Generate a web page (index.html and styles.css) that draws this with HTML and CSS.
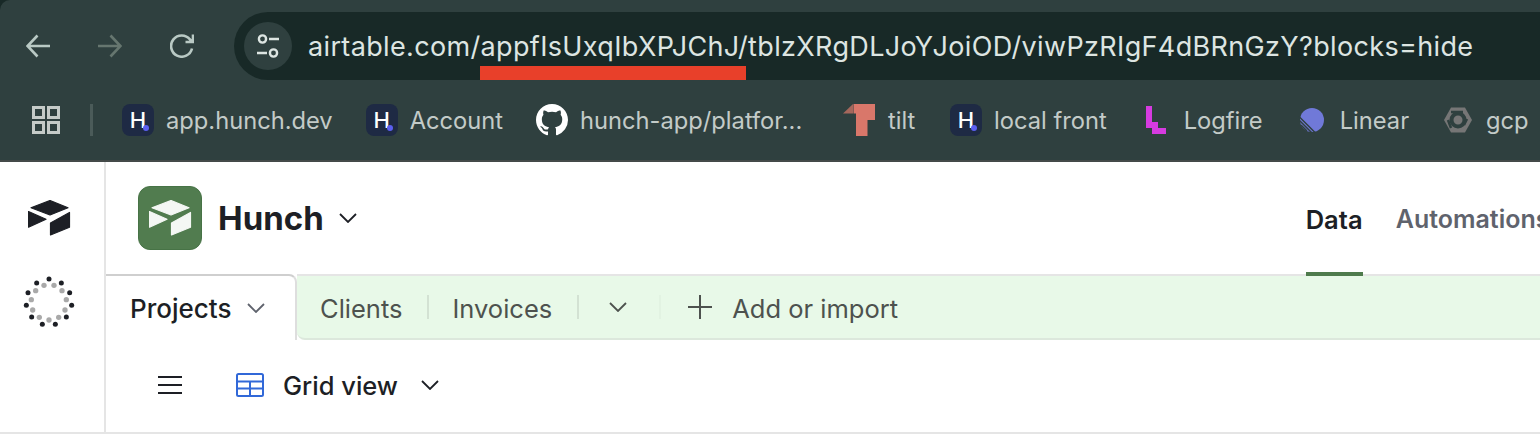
FILE: index.html
```html
<!DOCTYPE html>
<html lang="en">
<head>
    <meta charset="UTF-8">
    <title>Hunch: Data - Airtable</title>
    <link rel="stylesheet" href="styles.css">
</head>
<body>
    <!-- Browser chrome -->
    <header class="chrome">
        <div class="toolbar">
            <svg class="nav-icon" viewBox="0 0 24 24"><path d="M24 12H1.500M11.500 1.500 1.500 12l10 10.500"/></svg>
            <svg class="nav-icon nav-disabled" viewBox="0 0 24 24"><path d="M0 12h22.500M12.500 1.500l10 10.500-10 10.500"/></svg>
            <svg class="nav-icon" viewBox="0 0 24 24"><path d="M22 14.500A10.600 10.600 0 1 1 20 5.500L23 8M23 .5V8h-7.500"/></svg>
            <div class="omnibox">
                <span class="site-button">
                    <svg viewBox="0 0 24 24"><circle cx="6.500" cy="5" r="3.600"/><path d="M13 5h10M1 19h10"/><circle cx="17.500" cy="19" r="3.600"/></svg>
                </span>
                <span class="url">airtable.com/appfIsUxqIbXPJChJ/tblzXRgDLJoYJoiOD/viwPzRIgF4dBRnGzY?blocks=hide</span>
            </div>
            <span class="annotation"></span>
        </div>
        <nav class="bookmarks">
            <svg class="apps-icon" viewBox="0 0 28 28"><path d="M1.500 1.500h10v10h-10zM16.500 1.500h10v10h-10zM1.500 16.500h10v10h-10zM16.500 16.500h10v10h-10z"/></svg>
            <span class="bookmarks-sep"></span>
            <div class="bookmark-list">
                <a class="bookmark"><span class="hunch-icon">H</span>app.hunch.dev</a>
                <a class="bookmark"><span class="hunch-icon">H</span>Account</a>
                <a class="bookmark">
                    <svg class="fav" viewBox="0 0 16 16"><path fill="#fff" d="M8 0C3.58 0 0 3.58 0 8c0 3.54 2.29 6.53 5.47 7.59.4.07.55-.17.55-.38 0-.19-.01-.82-.01-1.49-2.01.37-2.53-.49-2.69-.94-.09-.23-.48-.94-.82-1.13-.28-.15-.68-.52-.01-.53.63-.01 1.08.58 1.23.82.72 1.21 1.87.87 2.33.66.07-.52.28-.87.51-1.07-1.78-.2-3.64-.89-3.64-3.95 0-.87.31-1.59.82-2.15-.08-.2-.36-1.02.08-2.12 0 0 .67-.21 2.2.82.64-.18 1.32-.27 2-.27s1.36.09 2 .27c1.53-1.04 2.2-.82 2.2-.82.44 1.1.16 1.92.08 2.12.51.56.82 1.27.82 2.15 0 3.07-1.87 3.750-3.650 3.950.29.25.54.73.54 1.48 0 1.070-.01 1.930-.01 2.200 0 .21.15.46.55.38A8.010 8.010 0 0 0 16 8c0-4.420-3.580-8-8-8z"/></svg>
                    <span class="bookmark-text">hunch-app/platfor...</span>
                </a>
                <a class="bookmark">
                    <svg class="fav" viewBox="0 0 32 32"><path fill="#a5675c" d="M0 9.500 10 0v9.500z"/><path fill="#d9776a" d="M10.500 0H32v16h-7.500v16H13V9.500h-2.500z"/></svg>
                    <span class="bookmark-short">tilt</span>
                </a>
                <a class="bookmark"><span class="hunch-icon">H</span>local front</a>
                <a class="bookmark">
                    <svg class="fav" viewBox="0 0 32 32"><path fill="#d63be0" d="M6 2h6v16h6v6h8v6H12v-6H6z"/></svg>
                    Logfire
                </a>
                <a class="bookmark">
                    <svg class="fav" viewBox="0 0 32 32">
                        <circle cx="16" cy="16" r="12" fill="#7079d8"/>
                        <path stroke="#2f403f" stroke-width="1.500" d="M3 12.500 19.500 29M3.500 16.500 15.500 28.500M5 21 11 27"/>
                    </svg>
                    Linear
                </a>
                <a class="bookmark">
                    <svg class="fav" viewBox="0 0 32 32">
                        <path fill="#767676" d="M9 3.500h14l7 12.500-7 12.500H9L2 16z"/>
                        <circle cx="16" cy="16" r="6.500" fill="none" stroke="#2f403f" stroke-width="4"/>
                        <path stroke="#2f403f" stroke-width="2.500" d="M9 8h12M25 15l-3 6M9 24 6 16"/>
                    </svg>
                    gcp
                </a>
            </div>
        </nav>
    </header>

    <div class="app">
        <!-- Left rail -->
        <aside class="rail">
            <svg class="rail-logo" viewBox="0 0 43 36">
                <path d="M22 .5 40 7.700 22 15 3 7.700zM.5 11.500 18 19.300.5 27.200zM22.500 23 41.500 12.500V27.300L22.500 35z"/>
            </svg>
            <svg class="rail-spinner" viewBox="66 344 162 162">
                <g fill="#1d1f25">
                    <circle cx="147" cy="356" r="7.500"/><circle cx="184" cy="368" r="7.500"/><circle cx="209" cy="397" r="7.500"/>
                    <circle cx="215" cy="435" r="7.500"/><circle cx="199" cy="470" r="7.500"/><circle cx="166" cy="492" r="7.500"/>
                    <circle cx="127" cy="492" r="7.500"/><circle cx="95" cy="470" r="7.500"/><circle cx="79" cy="435" r="7.500"/>
                    <circle cx="84" cy="397" r="7.500"/><circle cx="110" cy="368" r="7.500"/>
                </g>
                <g fill="#a9a9a9">
                    <circle cx="162" cy="375" r="8"/><circle cx="186" cy="391" r="8"/><circle cx="199" cy="418" r="8"/>
                    <circle cx="195" cy="449" r="8"/><circle cx="176" cy="471" r="8"/><circle cx="147" cy="479" r="8"/>
                    <circle cx="118" cy="471" r="8"/><circle cx="98" cy="449" r="8"/><circle cx="94" cy="418" r="8"/>
                    <circle cx="107" cy="391" r="8"/><circle cx="132" cy="375" r="8"/>
                </g>
            </svg>
        </aside>

        <main class="base">
            <div class="base-header">
                <span class="base-logo">
                    <svg viewBox="0 0 43 36"><path d="M22 .5 40 7.700 22 15 3 7.700zM.5 11.500 18 19.300.5 27.200zM22.500 23 41.500 12.500V27.300L22.500 35z"/></svg>
                </span>
                <h1 class="base-name">Hunch</h1>
                <svg class="chevron chevron-name" viewBox="0 0 18 10"><path d="M1 1l8 8 8-8"/></svg>
                <div class="base-tabs">
                    <a class="base-tab is-active">Data</a>
                    <a class="base-tab">Automations</a>
                </div>
            </div>

            <div class="table-tabs">
                <div class="table-tab-active">
                    <span>Projects</span>
                    <svg class="chevron" viewBox="0 0 18 10"><path d="M1 1l8 8 8-8"/></svg>
                </div>
                <div class="table-rest">
                    <a class="table-tab">Clients</a>
                    <span class="table-sep"></span>
                    <a class="table-tab">Invoices</a>
                    <span class="table-sep"></span>
                    <svg class="chevron chevron-more" viewBox="0 0 18 10"><path d="M1 1l8 8 8-8"/></svg>
                    <span class="table-sep table-sep-faint"></span>
                    <svg class="plus-icon" viewBox="0 0 24 24"><path d="M12 0v24M0 12h24"/></svg>
                    <a class="table-tab">Add or import</a>
                </div>
            </div>

            <div class="view-bar">
                <svg class="menu-icon" viewBox="0 0 24 20"><path d="M0 2h24M0 10h24M0 18h24"/></svg>
                <svg class="grid-icon" viewBox="0 0 28 24"><path d="M2.500 1h23A1.500 1.500 0 0 1 27 2.500v19a1.500 1.500 0 0 1-1.500 1.500h-23A1.500 1.500 0 0 1 1 21.500v-19A1.500 1.500 0 0 1 2.500 1zM1 8.500h26M1 15.500h26M14 8.500V23"/></svg>
                <span class="view-name">Grid view</span>
                <svg class="chevron chevron-view" viewBox="0 0 18 10"><path d="M1 1l8 8 8-8"/></svg>
            </div>
        </main>
    </div>
</body>
</html>
```

FILE: styles.css
```css
* {
    margin: 0;
    padding: 0;
    box-sizing: border-box;
}

html, body {
    height: 100%;
    overflow: hidden;
}

body {
    font-family: 'Inter', 'Liberation Sans', sans-serif;
    background-color: #182927;
    color: #1d1f25;
}

svg {
    display: block;
    flex: none;
}

/* Browser chrome */
.chrome {
    height: 162px;
    background-color: #2f403f;
    border-bottom: 2px solid #444a49;
    border-top-left-radius: 10px;
}

.toolbar {
    position: relative;
    display: flex;
    align-items: center;
    height: 92px;
    padding: 12px 0 12px 26px;
}

.nav-icon {
    width: 24px;
    height: 24px;
    margin-right: 48px;
    fill: none;
    stroke: #b9c9c4;
    stroke-width: 2.600;
}

.nav-disabled {
    stroke: #66766f;
}

.omnibox {
    flex: 1;
    display: flex;
    align-items: center;
    height: 68px;
    margin-left: -8px;
    padding-left: 10px;
    background-color: #182927;
    border-radius: 34px 0 0 34px;
}

.site-button {
    display: flex;
    align-items: center;
    justify-content: center;
    width: 48px;
    height: 48px;
    border-radius: 50%;
    background-color: #2f403f;
}

.site-button svg {
    width: 24px;
    height: 24px;
    fill: none;
    stroke: #dde5e2;
    stroke-width: 2.400;
}

.url {
    margin-left: 16px;
    font-size: 27px;
    letter-spacing: 0.35px;
    color: #dde5e2;
    white-space: nowrap;
}

/* Red line drawn over the screenshot */
.annotation {
    position: absolute;
    left: 480px;
    top: 66px;
    width: 266px;
    height: 14px;
    background-color: #e8402a;
}

.bookmarks {
    display: flex;
    align-items: center;
    height: 56px;
    padding-left: 32px;
}

.apps-icon {
    width: 28px;
    height: 28px;
    fill: none;
    stroke: #c5cbc8;
    stroke-width: 3;
}

.bookmarks-sep {
    width: 3px;
    height: 32px;
    margin: 0 29px 0 30px;
    background-color: #4b5b59;
}

.bookmark-list {
    display: flex;
    align-items: center;
    gap: 33px;
}

.bookmark {
    display: flex;
    align-items: center;
    gap: 12px;
    font-size: 23.700px;
    color: #c3cbc8;
    white-space: nowrap;
}

.bookmark-text {
    width: 230px;
}

.bookmark-short {
    width: 29px;
    margin-left: 1px;
}

.fav {
    width: 32px;
    height: 32px;
    fill: none;
}

.hunch-icon {
    position: relative;
    display: flex;
    align-items: center;
    justify-content: center;
    width: 32px;
    height: 32px;
    border-radius: 8px;
    background-color: #1e2a44;
    color: #fff;
    font-size: 22px;
    font-weight: 500;
}

.hunch-icon::after {
    content: "";
    position: absolute;
    right: 5px;
    bottom: 5px;
    width: 6px;
    height: 6px;
    border-radius: 50%;
    background-color: #5b5ff0;
}

/* App */
.app {
    display: flex;
    height: 272px;
    background-color: #fff;
    border-bottom: 2px solid #e5e5e5;
}

.rail {
    flex: none;
    display: flex;
    flex-direction: column;
    align-items: center;
    width: 106px;
    padding: 38px 6px 0 0;
    border-right: 2px solid #e5e5e5;
}

.rail-logo {
    width: 43px;
    height: 36px;
    fill: #1d1f25;
    stroke: #1d1f25;
    stroke-width: 1.200;
    stroke-linejoin: round;
}

.rail-spinner {
    width: 54px;
    height: 54px;
    margin-top: 39px;
}

.base {
    flex: 1;
    min-width: 0;
    display: flex;
    flex-direction: column;
}

.base-header {
    display: flex;
    align-items: center;
    height: 112px;
    padding-left: 32px;
}

.base-logo {
    flex: none;
    display: flex;
    align-items: center;
    justify-content: center;
    width: 64px;
    height: 64px;
    margin-top: -1px;
    border: 1px solid #477346;
    border-radius: 12px;
    background-color: #517c4f;
}

.base-logo svg {
    width: 43px;
    height: 36px;
    fill: #f4f7f4;
    stroke: #f4f7f4;
    stroke-width: 1.200;
    stroke-linejoin: round;
}

.base-name {
    flex: none;
    margin-left: 16px;
    font-size: 33px;
    font-weight: 700;
}

.chevron {
    width: 18px;
    height: 10px;
    fill: none;
    stroke: #1d1f25;
    stroke-width: 1.800;
}

.chevron-name {
    margin-left: 15px;
}

.base-tabs {
    flex: none;
    position: relative;
    display: flex;
    align-self: stretch;
    gap: 33px;
    margin-left: 949px;
}

.base-tab {
    display: flex;
    align-items: center;
    height: 114px;
    padding-top: 4px;
    border-bottom: 4px solid transparent;
    font-size: 25px;
    font-weight: 600;
    color: #5f636d;
    white-space: nowrap;
}

.base-tab.is-active {
    width: 57px;
    font-size: 25.500px;
    color: #1d1f25;
    border-bottom-color: #4f7b4d;
}

.table-tabs {
    display: flex;
    height: 66px;
    font-size: 25.500px;
    color: #4d524e;
}

.table-tab-active {
    flex: none;
    display: flex;
    align-items: center;
    gap: 16px;
    width: 191px;
    padding-left: 24px;
    border-top: 2px solid #cfcfcf;
    border-right: 2px solid #dedede;
    border-radius: 0 8px 0 0;
    font-size: 26px;
    font-weight: 500;
    color: #1d1f25;
}

.table-tab-active .chevron {
    stroke: #5f636d;
}

.table-rest {
    flex: 1;
    display: flex;
    align-items: center;
    padding-left: 23px;
    background-color: #e8f9e8;
    border-top: 2px solid #e5e5e5;
    border-bottom: 2px solid #dce8dc;
    border-bottom-left-radius: 8px;
}

.table-tab {
    margin-top: 2px;
    white-space: nowrap;
}

.table-sep {
    width: 2px;
    height: 24px;
    margin: 0 23px 0 25px;
    background-color: #d3e2d3;
}

.table-sep-faint {
    background-color: #e2f3e2;
    margin: 0 0 0 32px;
}

.chevron-more {
    margin-left: 7px;
    stroke: #4d524e;
}

.plus-icon {
    width: 24px;
    height: 24px;
    margin: 0 20px 0 27px;
    fill: none;
    stroke: #4d524e;
    stroke-width: 2;
}

.view-bar {
    flex: 1;
    display: flex;
    align-items: center;
    padding: 0 0 2px 52px;
}

.menu-icon {
    width: 24px;
    height: 20px;
    fill: none;
    stroke: #1d1f25;
    stroke-width: 2;
}

.grid-icon {
    width: 28px;
    height: 24px;
    margin-left: 54px;
    fill: none;
    stroke: #3168d8;
    stroke-width: 2;
}

.view-name {
    margin-left: 19px;
    font-size: 25.500px;
    font-weight: 500;
}

.chevron-view {
    margin-left: 23px;
}
```
